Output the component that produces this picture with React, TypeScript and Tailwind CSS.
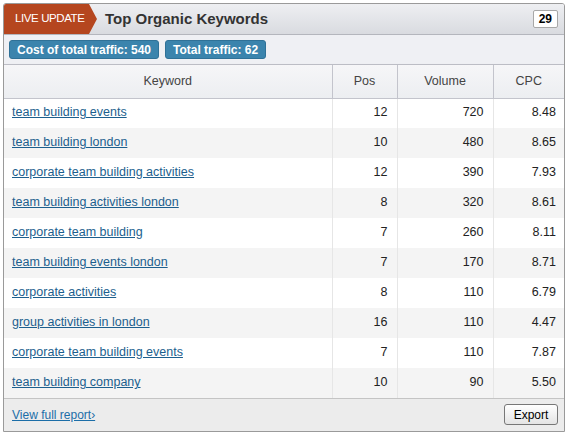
import React from 'react';

interface KeywordRow {
  keyword: string;
  pos: number;
  volume: number;
  cpc: string;
}

const rows: KeywordRow[] = [
  { keyword: 'team building events', pos: 12, volume: 720, cpc: '8.48' },
  { keyword: 'team building london', pos: 10, volume: 480, cpc: '8.65' },
  { keyword: 'corporate team building activities', pos: 12, volume: 390, cpc: '7.93' },
  { keyword: 'team building activities london', pos: 8, volume: 320, cpc: '8.61' },
  { keyword: 'corporate team building', pos: 7, volume: 260, cpc: '8.11' },
  { keyword: 'team building events london', pos: 7, volume: 170, cpc: '8.71' },
  { keyword: 'corporate activities', pos: 8, volume: 110, cpc: '6.79' },
  { keyword: 'group activities in london', pos: 16, volume: 110, cpc: '4.47' },
  { keyword: 'corporate team building events', pos: 7, volume: 110, cpc: '7.87' },
  { keyword: 'team building company', pos: 10, volume: 90, cpc: '5.50' },
];

export default function App() {
  return (
    <div className="w-[570px] h-[436px] bg-white pt-[3px] pl-[3px] font-['Liberation_Sans',Arial,sans-serif]">
      <div className="w-[562px] border border-[#9a9a9a] rounded-t-[3px] overflow-hidden">
        {/* header */}
        <div className="h-[31px] flex items-stretch bg-gradient-to-b from-[#eeeff2] to-[#d9dbe0] border-b border-[#b4b6bd]">
          <div className="relative shrink-0 flex items-center bg-[#b5461f] pl-[11px] w-[84px] whitespace-nowrap text-[11.5px] tracking-[-0.4px] text-white">
            LIVE UPDATE
            <svg className="absolute left-[84px] top-0" width="9" height="30" viewBox="0 0 9 30">
              <polygon points="0,0 1,0 9,15 1,30 0,30" fill="#b5461f" />
            </svg>
          </div>
          <div className="ml-[17px] flex items-center text-[15px] font-bold text-[#333]">Top Organic Keywords</div>
          <div className="ml-auto mr-[6px] flex items-center">
            <span className="h-[18px] px-[5px] flex items-center bg-white border border-[#a8a8a8] rounded-[2px] text-[12px] font-bold text-black">29</span>
          </div>
        </div>

        {/* badges */}
        <div className="h-[30px] flex items-center gap-[6px] pl-[5px] bg-[#eff0f4] border-b border-[#bfc0c8]">
          <span className="h-[19px] px-[7px] flex items-center rounded-[3px] bg-[#3b84ad] border border-[#2f7197] text-white text-[12px] font-bold">Cost of total traffic: 540</span>
          <span className="h-[19px] px-[7px] flex items-center rounded-[3px] bg-[#3b84ad] border border-[#2f7197] text-white text-[12px] font-bold">Total traffic: 62</span>
        </div>

        {/* table */}
        <table className="w-[560px] table-fixed border-collapse text-[12.5px]">
          <colgroup>
            <col className="w-[328px]" />
            <col className="w-[65px]" />
            <col className="w-[96px]" />
            <col className="w-[71px]" />
          </colgroup>
          <thead>
            <tr className="h-[33px] bg-gradient-to-b from-[#f6f6f8] to-[#eceef1] text-[#444] shadow-[0_2px_4px_rgba(0,0,0,0.12)]">
              <th className="font-normal text-center border-b border-[#c3c4cc]">Keyword</th>
              <th className="font-normal text-center border-l border-b border-[#c3c4cc]">Pos</th>
              <th className="font-normal text-center border-l border-b border-[#c3c4cc]">Volume</th>
              <th className="font-normal text-center border-l border-b border-[#c3c4cc]">CPC</th>
            </tr>
          </thead>
          <tbody>
            {rows.map((r, i) => (
              <tr key={r.keyword} className={`h-[30px] text-[#222] ${i % 2 === 0 ? 'bg-white' : 'bg-[#f4f4f4]'}`}>
                <td className="pl-[8px] pb-[1px]">
                  <a href="#" className="text-[#1c5f8e] underline">{r.keyword}</a>
                </td>
                <td className="text-right pr-[9px] pb-[1px] border-l border-[#e6e6e6]">{r.pos}</td>
                <td className="text-right pr-[9px] pb-[1px] border-l border-[#e6e6e6]">{r.volume}</td>
                <td className="text-right pr-[8px] pb-[1px] border-l border-[#e6e6e6]">{r.cpc}</td>
              </tr>
            ))}
          </tbody>
        </table>

        {/* footer */}
        <div className="h-[33px] flex items-center justify-between pl-[8px] pr-[6px] pb-[1px] bg-[#ececec] border-t border-[#c4c4c4]">
          <a href="#" className="text-[12px] text-[#1c6ea8] underline">View&nbsp;full report›</a>
          <button className="h-[21px] w-[54px] rounded-[3px] border border-[#777] bg-gradient-to-b from-white to-[#e4e4e4] text-[12px] text-black">Export</button>
        </div>
      </div>
    </div>
  );
}
